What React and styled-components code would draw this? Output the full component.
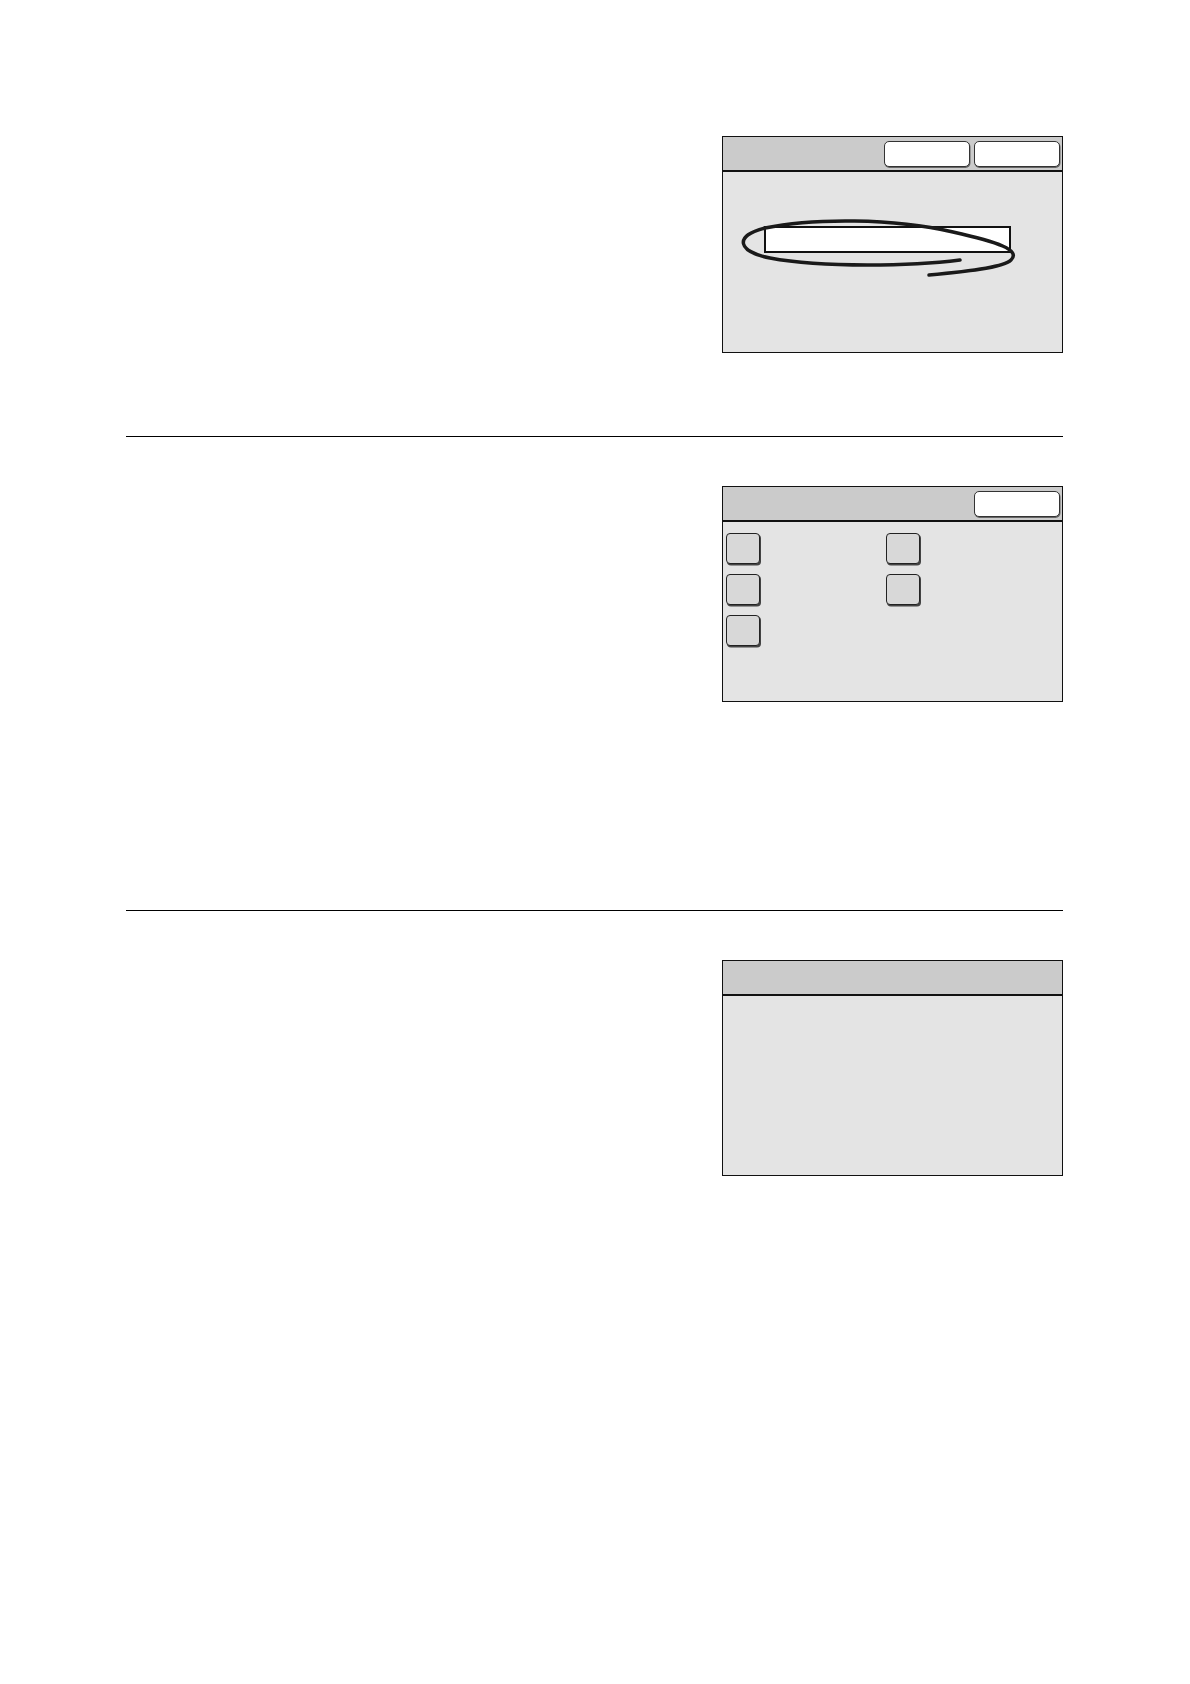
import React from 'react'
import styled, { createGlobalStyle } from 'styled-components'

const GlobalStyle = createGlobalStyle`
  html, body {
    margin: 0;
    padding: 0;
    background: #fff;
    font-family: "Liberation Sans", Arial, sans-serif;
  }
`

const Page = styled.div`
  width: 937px;
  min-height: 1684px;
  box-sizing: border-box;
  padding: 136px 0 0 126px;
`

const Section = styled.section`
  display: flex;
  justify-content: flex-end;
  margin-top: ${p => p.$top || 0}px;
  width: 937px;
`

const Rule = styled.div`
  width: 937px;
  height: 1px;
  background: #000;
  margin-top: ${p => p.$top || 0}px;
`

const Panel = styled.div`
  box-sizing: border-box;
  width: 341px;
  height: ${p => p.$height || 216}px;
  border: 1.5px solid #111;
  background: #e4e4e4;
  display: flex;
  flex-direction: column;
`

const PanelHeader = styled.div`
  height: 33px;
  flex: none;
  background: #cbcbcb;
  border-bottom: 2.5px solid #111;
  display: flex;
  justify-content: flex-end;
  align-items: center;
  gap: 4px;
  padding-right: 2px;
`

const HeaderButton = styled.div`
  box-sizing: border-box;
  width: 86px;
  height: 26px;
  background: #fff;
  border: 1.5px solid #333;
  border-radius: 5px;
  box-shadow: 0.5px 1px 0 #666;
`

const PanelBody = styled.div`
  position: relative;
  flex: 1;
`

const InputBody = styled(PanelBody)`
  padding: 54px 0 0 41px;
`

const TextBox = styled.div`
  box-sizing: border-box;
  width: 247px;
  height: 27px;
  background: #fff;
  border: 2px solid #111;
`

const Scribble = styled.svg`
  position: absolute;
  left: 0;
  top: 0;
  width: 338px;
  height: 181px;
  overflow: visible;
  pointer-events: none;
`

const ButtonGrid = styled(PanelBody)`
  display: grid;
  grid-template-columns: 160px 160px;
  grid-auto-rows: 31px;
  row-gap: 10px;
  align-content: start;
  padding: 11px 0 0 2.5px;
`

const SquareButton = styled.div`
  box-sizing: border-box;
  width: 34px;
  height: 31px;
  background: #d8d8d8;
  border: 1.5px solid #222;
  border-radius: 4px;
  box-shadow: 1px 1.5px 0 #444;
`

function ConfirmPanel () {
  return (
    <Panel $height={217}>
      <PanelHeader>
        <HeaderButton />
        <HeaderButton />
      </PanelHeader>
      <InputBody>
        <TextBox />
        <Scribble viewBox="0 0 338 181">
          <path
            d="M 237 88 C 190 94, 100 96, 47 86 C 15 80, 10 64, 42 56 C 90 46, 170 46, 230 60 C 275 70, 298 78, 288 88 C 280 96, 240 100, 206 103"
            fill="none"
            stroke="#1a1a1a"
            strokeWidth="3.5"
            strokeLinecap="round"
            strokeLinejoin="round"
          />
        </Scribble>
      </InputBody>
    </Panel>
  )
}

function OptionsPanel () {
  return (
    <Panel>
      <PanelHeader>
        <HeaderButton />
      </PanelHeader>
      <ButtonGrid>
        <SquareButton />
        <SquareButton />
        <SquareButton />
        <SquareButton />
        <SquareButton />
      </ButtonGrid>
    </Panel>
  )
}

function EmptyPanel () {
  return (
    <Panel>
      <PanelHeader />
      <PanelBody />
    </Panel>
  )
}

export default function App () {
  return (
    <>
      <GlobalStyle />
      <Page>
        <Section>
          <ConfirmPanel />
        </Section>
        <Rule $top={83} />
        <Section $top={49}>
          <OptionsPanel />
        </Section>
        <Rule $top={208} />
        <Section $top={49}>
          <EmptyPanel />
        </Section>
      </Page>
    </>
  )
}
